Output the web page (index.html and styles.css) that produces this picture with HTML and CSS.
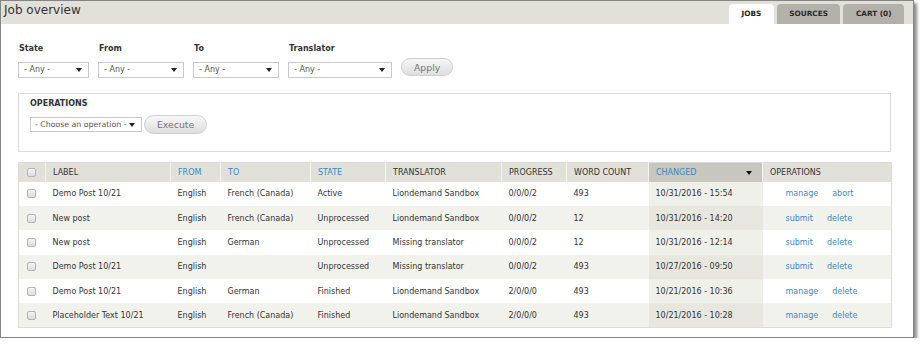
FILE: index.html
```html
<!DOCTYPE html>
<html lang="en">
<head>
    <meta charset="UTF-8">
    <title>Job overview</title>
    <link rel="stylesheet" href="styles.css">
</head>
<body>

    <div class="frame">
        <div class="topbar">
            <h1 class="page-title">Job overview</h1>
            <ul class="tabs">
                <li class="tab active">JOBS</li>
                <li class="tab">SOURCES</li>
                <li class="tab">CART (0)</li>
            </ul>
        </div>

        <div class="content">
            <form class="filters">
                <div class="filter">
                    <label>State</label>
                    <div class="select w-state">- Any -</div>
                </div>
                <div class="filter">
                    <label>From</label>
                    <div class="select w-lang">- Any -</div>
                </div>
                <div class="filter">
                    <label>To</label>
                    <div class="select w-lang">- Any -</div>
                </div>
                <div class="filter">
                    <label>Translator</label>
                    <div class="select w-translator">- Any -</div>
                </div>
                <button type="button" class="btn btn-apply">Apply</button>
            </form>

            <div class="operations">
                <div class="operations-title">OPERATIONS</div>
                <div class="operations-row">
                    <div class="select w-operation">- Choose an operation -</div>
                    <button type="button" class="btn">Execute</button>
                </div>
            </div>

            <table class="jobs">
                <colgroup>
                    <col style="width: 27px">
                    <col style="width: 125px">
                    <col style="width: 50px">
                    <col style="width: 90px">
                    <col style="width: 75px">
                    <col style="width: 116px">
                    <col style="width: 65px">
                    <col style="width: 82px">
                    <col style="width: 114px">
                    <col style="width: 129px">
                </colgroup>
                <thead>
                    <tr>
                        <th class="cb"><input type="checkbox"></th>
                        <th>LABEL</th>
                        <th><a href="#">FROM</a></th>
                        <th><a href="#">TO</a></th>
                        <th><a href="#">STATE</a></th>
                        <th>TRANSLATOR</th>
                        <th>PROGRESS</th>
                        <th>WORD COUNT</th>
                        <th class="sorted"><a href="#">CHANGED</a><span class="sort-arrow"></span></th>
                        <th>OPERATIONS</th>
                    </tr>
                </thead>
                <tbody>
                    <tr>
                        <td class="cb"><input type="checkbox"></td>
                        <td>Demo Post 10/21</td>
                        <td>English</td>
                        <td>French (Canada)</td>
                        <td>Active</td>
                        <td>Liondemand Sandbox</td>
                        <td>0/0/0/2</td>
                        <td>493</td>
                        <td class="sorted">10/31/2016 - 15:54</td>
                        <td class="ops"><a href="#">manage</a><a href="#">abort</a></td>
                    </tr>
                    <tr>
                        <td class="cb"><input type="checkbox"></td>
                        <td>New post</td>
                        <td>English</td>
                        <td>French (Canada)</td>
                        <td>Unprocessed</td>
                        <td>Liondemand Sandbox</td>
                        <td>0/0/0/2</td>
                        <td>12</td>
                        <td class="sorted">10/31/2016 - 14:20</td>
                        <td class="ops"><a href="#">submit</a><a href="#">delete</a></td>
                    </tr>
                    <tr>
                        <td class="cb"><input type="checkbox"></td>
                        <td>New post</td>
                        <td>English</td>
                        <td>German</td>
                        <td>Unprocessed</td>
                        <td>Missing translator</td>
                        <td>0/0/0/2</td>
                        <td>12</td>
                        <td class="sorted">10/31/2016 - 12:14</td>
                        <td class="ops"><a href="#">submit</a><a href="#">delete</a></td>
                    </tr>
                    <tr>
                        <td class="cb"><input type="checkbox"></td>
                        <td>Demo Post 10/21</td>
                        <td>English</td>
                        <td></td>
                        <td>Unprocessed</td>
                        <td>Missing translator</td>
                        <td>0/0/0/2</td>
                        <td>493</td>
                        <td class="sorted">10/27/2016 - 09:50</td>
                        <td class="ops"><a href="#">submit</a><a href="#">delete</a></td>
                    </tr>
                    <tr>
                        <td class="cb"><input type="checkbox"></td>
                        <td>Demo Post 10/21</td>
                        <td>English</td>
                        <td>German</td>
                        <td>Finished</td>
                        <td>Liondemand Sandbox</td>
                        <td>2/0/0/0</td>
                        <td>493</td>
                        <td class="sorted">10/21/2016 - 10:36</td>
                        <td class="ops"><a href="#">manage</a><a href="#">delete</a></td>
                    </tr>
                    <tr>
                        <td class="cb"><input type="checkbox"></td>
                        <td>Placeholder Text 10/21</td>
                        <td>English</td>
                        <td>French (Canada)</td>
                        <td>Finished</td>
                        <td>Liondemand Sandbox</td>
                        <td>2/0/0/0</td>
                        <td>493</td>
                        <td class="sorted">10/21/2016 - 10:28</td>
                        <td class="ops"><a href="#">manage</a><a href="#">delete</a></td>
                    </tr>
                </tbody>
            </table>
        </div>
    </div>

</body>
</html>
```

FILE: styles.css
```css
/* Reset */
* {
    margin: 0;
    padding: 0;
    box-sizing: border-box;
}

body {
    font-family: "DejaVu Sans", Verdana, sans-serif;
    font-size: 8px;
    color: #333;
    background-color: #fff;
}

a {
    color: #3a87c4;
    text-decoration: none;
}

/* Screenshot frame */
.frame {
    width: 914px;
    height: 338px;
    border: 1px solid #858585;
    box-shadow: 3px 3px 3px rgba(0, 0, 0, 0.45);
    background-color: #fff;
}

/* Title bar with tabs */
.topbar {
    display: flex;
    justify-content: space-between;
    align-items: flex-end;
    height: 23px;
    background-color: #e1e0d9;
}

.page-title {
    align-self: flex-start;
    font-size: 12px;
    font-weight: normal;
    line-height: 16px;
    color: #333;
    padding-left: 3px;
    margin-top: 1px;
}

.tabs {
    display: flex;
    gap: 3px;
    list-style: none;
    margin-right: 9px;
}

.tab {
    height: 20px;
    line-height: 20px;
    padding: 0 12.5px;
    font-size: 7.3px;
    font-weight: bold;
    color: #2a2a2a;
    background-color: #b2b2ab;
    border-radius: 4px 4px 0 0;
}

.tab.active {
    background-color: #fff;
    color: #222;
}

.content {
    padding: 20px 21px 0 17px;
}

/* Filters */
.filters {
    display: flex;
    align-items: flex-end;
    gap: 9px;
}

.filter label {
    display: block;
    font-weight: bold;
    line-height: 10px;
    margin-bottom: 8px;
    margin-left: 1px;
}

.select {
    position: relative;
    height: 16px;
    line-height: 14px;
    padding-left: 5px;
    border: 1px solid #c8c8c8;
    background-color: #fff;
    color: #555;
    white-space: nowrap;
    overflow: hidden;
}

.select::after {
    content: "";
    position: absolute;
    right: 6px;
    top: 5px;
    border-left: 3px solid transparent;
    border-right: 3px solid transparent;
    border-top: 4px solid #222;
}

.w-state { width: 71px; }
.w-lang { width: 86px; }
.w-translator { width: 104px; }

.w-operation {
    width: 112px;
    height: 15px;
    line-height: 13px;
    padding-left: 4px;
    font-size: 7.8px;
}

.btn {
    height: 18px;
    padding: 0 12px;
    font-family: "DejaVu Sans", Verdana, sans-serif;
    font-size: 9.3px;
    color: #777;
    border: 1px solid #cfcfcf;
    border-radius: 10px;
    background: linear-gradient(#f7f7f7, #dedede);
}

.btn-apply {
    margin-bottom: 2px;
}

/* Operations box */
.operations {
    margin-top: 15px;
    height: 59px;
    padding: 5px 11px 0;
    border: 1px solid #dcdcdc;
    margin-right: 1px;
}

.operations-title {
    font-weight: bold;
    line-height: 10px;
    margin-bottom: 6px;
}

.operations-row {
    display: flex;
    align-items: center;
    gap: 2px;
}

.operations-row .btn {
    height: 19px;
}

/* Jobs table */
.jobs {
    margin-top: 10px;
    width: 873px;
    table-layout: fixed;
    border-collapse: collapse;
    border: 1px solid #dcdcd6;
}

.jobs th {
    height: 19px;
    padding: 0 7px;
    text-align: left;
    font-weight: normal;
    background-color: #e1e1da;
    border-left: 1px solid #f4f4ef;
}

.jobs th:first-child {
    border-left: none;
}

.jobs th.sorted {
    background-color: #c7c7c0;
    position: relative;
}

.sort-arrow {
    position: absolute;
    right: 10px;
    top: 8px;
    border-left: 3.5px solid transparent;
    border-right: 3.5px solid transparent;
    border-top: 4px solid #111;
}

.jobs td {
    height: 24.4px;
    padding: 0 7px;
    white-space: nowrap;
}

.jobs tbody tr:nth-child(even) {
    background-color: #f2f2ec;
}

.jobs td.sorted {
    background-color: #f0f0ea;
}

.jobs tbody tr:nth-child(even) td.sorted {
    background-color: #e7e7e0;
}

.jobs .cb {
    padding-left: 8px;
    padding-right: 0;
}

input[type="checkbox"] {
    appearance: none;
    display: block;
    width: 9px;
    height: 9px;
    border: 1px solid #b4b4b4;
    border-radius: 2px;
    background: linear-gradient(#f4f4f4, #dcdcdc);
}

.jobs td.ops {
    padding-left: 23px;
}

.ops a + a {
    margin-left: 14px;
}
```
